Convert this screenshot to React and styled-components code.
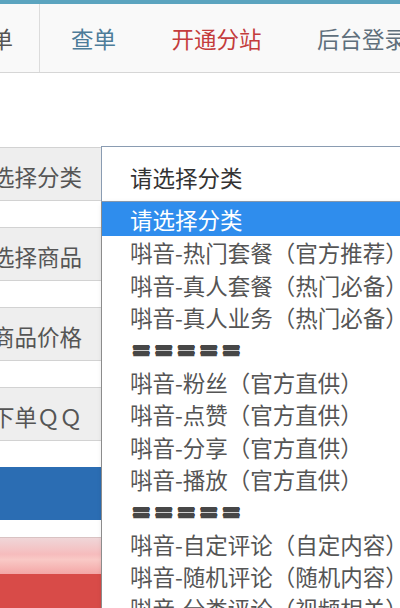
import styled, { createGlobalStyle } from 'styled-components';

const GlobalStyle = createGlobalStyle`
  html, body {
    margin: 0;
    padding: 0;
    background: #ffffff;
  }
  body {
    font-family: "Noto Sans CJK SC", "Noto Sans", sans-serif;
  }
`;

const Page = styled.div`
  width: 400px;
  height: 608px;
  overflow: hidden;
  background: #ffffff;
`;

const TopStrip = styled.div`
  height: 4px;
  background: #5ba4bf;
`;

const Nav = styled.nav`
  display: flex;
  align-items: stretch;
  height: 68px;
  background: #f9f9f9;
  border-bottom: 1px solid #d6d6d6;
`;

const NavHome = styled.div`
  width: 40px;
  flex: none;
  display: flex;
  align-items: center;
  justify-content: flex-end;
  padding-right: 26px;
  box-sizing: border-box;
  overflow: hidden;
  white-space: nowrap;
  border-right: 1px solid #dcdcdc;
  font-size: 22.5px;
  color: #555;
`;

const NavLinks = styled.div`
  display: flex;
  align-items: center;
  gap: 55.5px;
  padding-left: 31px;
  white-space: nowrap;
`;

const NavLink = styled.a`
  font-size: 22.5px;
  text-decoration: none;
  color: ${p => p.color || '#4d7c99'};
`;

const Form = styled.div`
  margin-top: 74px;
  display: flex;
  flex-direction: column;
  gap: 26px;
`;

const Row = styled.div`
  display: flex;
  height: 54px;
`;

const Label = styled.div`
  width: 101px;
  flex: none;
  display: flex;
  align-items: center;
  justify-content: flex-end;
  padding: 4px 19px 0 0;
  box-sizing: border-box;
  overflow: hidden;
  white-space: nowrap;
  background: #eeeeee;
  border-top: 1px solid #d2d2d2;
  border-bottom: 1px solid #d2d2d2;
  font-size: 22.5px;
  color: #555;
`;

const Field = styled.div`
  position: relative;
  flex: 1;
  margin-right: -12px;
  display: flex;
`;

const SelectBox = styled.div`
  flex: 1;
  display: flex;
  align-items: center;
  padding: 5px 0 0 28px;
  height: 56px;
  box-sizing: border-box;
  margin-top: -1px;
  background: #fff;
  border: 1px solid #8a9cb2;
  font-size: 22.5px;
  color: #333;
  white-space: nowrap;
`;

const Input = styled.div`
  flex: 1;
  border: 1px solid #cccccc;
  background: #fff;
`;

const Dropdown = styled.ul`
  position: absolute;
  z-index: 5;
  top: 55px;
  left: 0;
  right: 0;
  margin: 0;
  padding: 0;
  list-style: none;
  background: #fff;
  border-left: 1px solid #8c8c8c;
  box-shadow: 2px 2px 6px rgba(0, 0, 0, 0.15);
`;

const Option = styled.li`
  height: ${p => (p.active ? '34px' : '32.4px')};
  display: flex;
  align-items: center;
  padding-left: 28px;
  white-space: nowrap;
  font-size: 22.5px;
  color: ${p => (p.active ? '#ffffff' : '#555')};
  background: ${p => (p.active ? '#2f8ded' : 'transparent')};
`;

// the ＝＝＝＝＝ divider rows render as heavy double bars
const Divider = styled(Option)`
  color: #474747;
  font-weight: 700;
  text-shadow: 0 1.5px 0 #474747, 0 -1px 0 #474747, 0.6px 0 0 #474747, -0.6px 0 0 #474747;
`;

const BuyButton = styled.div`
  height: 53px;
  background: #2b6db3;
`;

const Notice = styled.div`
  margin-top: 17px;
  height: 37px;
  border-top: 1px solid #d9c2c2;
  box-sizing: border-box;
  background: linear-gradient(180deg, #efd6d8 0%, #f6bcbd 45%, #f9c9c6 60%, #f3a6a6 100%);
`;

const RedBar = styled.div`
  height: 60px;
  background: #d84b48;
`;

const options = [
  '唞音-热门套餐（官方推荐）',
  '唞音-真人套餐（热门必备）',
  '唞音-真人业务（热门必备）',
  null,
  '唞音-粉丝（官方直供）',
  '唞音-点赞（官方直供）',
  '唞音-分享（官方直供）',
  '唞音-播放（官方直供）',
  null,
  '唞音-自定评论（自定内容）',
  '唞音-随机评论（随机内容）',
  '唞音-分类评论（视频相关）',
  '唞音-直播人气（官方直供）',
];

export default function App() {
  return (
    <Page>
      <GlobalStyle />
      <TopStrip />
      <Nav>
        <NavHome>自助下单</NavHome>
        <NavLinks>
          <NavLink color="#4d7c99">查单</NavLink>
          <NavLink color="#c43c3c">开通分站</NavLink>
          <NavLink color="#5f6f7c">后台登录</NavLink>
        </NavLinks>
      </Nav>
      <Form>
        <Row>
          <Label>选择分类</Label>
          <Field>
            <SelectBox>请选择分类</SelectBox>
            <Dropdown>
              <Option active>请选择分类</Option>
              {options.map((o, i) =>
                o ? <Option key={i}>{o}</Option> : <Divider key={i}>＝＝＝＝＝</Divider>
              )}
            </Dropdown>
          </Field>
        </Row>
        <Row>
          <Label>选择商品</Label>
          <Field><Input /></Field>
        </Row>
        <Row>
          <Label>商品价格</Label>
          <Field><Input /></Field>
        </Row>
        <Row>
          <Label>下单ＱＱ</Label>
          <Field><Input /></Field>
        </Row>
        <div>
          <BuyButton />
          <Notice />
          <RedBar />
        </div>
      </Form>
    </Page>
  );
}
